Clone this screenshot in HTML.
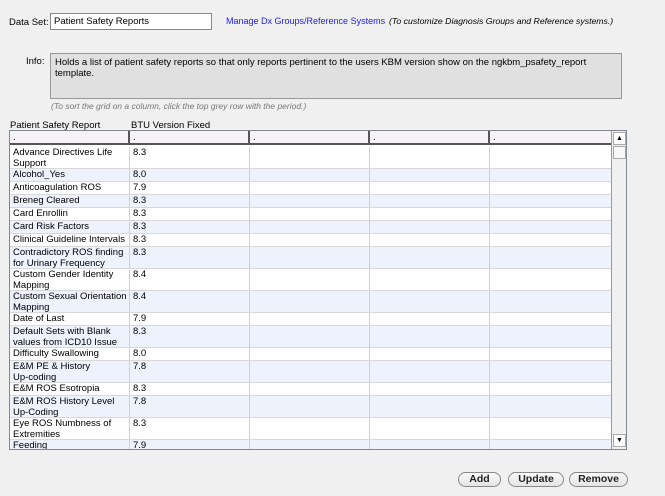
<!DOCTYPE html>
<html><head><style>
*{margin:0;padding:0;box-sizing:border-box}
body{width:665px;height:496px;background:#f0f0f0;font-family:"Liberation Sans",sans-serif;font-size:9.5px;color:#000;position:relative;overflow:hidden}
.a{position:absolute;white-space:nowrap}
.grid{position:absolute;left:9px;top:130px;width:618px;height:320px;border:1px solid #828790;background:#fff;overflow:hidden}
.hdr{position:absolute;left:0;top:0;width:601px;height:14px;background:#f5f3f6;border-bottom:2px solid #555}
.hc{position:absolute;top:0;height:14px;border-right:2px solid #555;padding:2px 0 0 3px;line-height:10px}
.row{position:absolute;left:0;width:601px;border-bottom:1px solid #d8d8d8}
.row.b{background:#eef2fd}
.c{position:absolute;top:0;bottom:0;border-right:1px solid #d0d0d0;padding:1px 3px;line-height:10.5px;white-space:nowrap;overflow:hidden}
.sb{position:absolute;left:601px;top:0;width:16px;height:318px;background:#f0f0f0;border-left:1px solid #999}
.btn{position:absolute;top:472px;height:15px;border:1px solid #888;border-radius:8px;background:linear-gradient(#fafafa,#e4e4e4);font-weight:bold;font-size:10.5px;text-align:center;line-height:13px;color:#222}
</style></head><body>
<div class="a" style="left:9px;top:17px">Data Set:</div>
<div class="a" style="left:50px;top:13px;width:162px;height:17px;border:1px solid #888;background:#fff;padding:2px 3px">Patient Safety Reports</div>
<div class="a" style="left:226px;top:16px;color:#1a1aff;font-size:9px">Manage Dx Groups/Reference Systems</div>
<div class="a" style="left:389px;top:16px;font-style:italic;font-size:8.7px">(To customize Diagnosis Groups and Reference systems.)</div>
<div class="a" style="left:26px;top:56px">Info:</div>
<div class="a" style="left:50px;top:53px;width:572px;height:46px;border:1px solid #999;background:#e0e0e0;padding:3px 4px;line-height:11px">Holds a list of patient safety reports so that only reports pertinent to the users KBM version show on the ngkbm_psafety_report<br>template.</div>
<div class="a" style="left:51px;top:101px;font-style:italic;font-size:8.5px;color:#777">(To sort the grid on a column, click the top grey row with the period.)</div>
<div class="a" style="left:10px;top:120px">Patient Safety Report</div>
<div class="a" style="left:131px;top:120px">BTU Version Fixed</div>
<div class="grid">
<div class="hdr">
<div class="hc" style="left:0;width:120px">.</div>
<div class="hc" style="left:120px;width:120px">.</div>
<div class="hc" style="left:240px;width:120px">.</div>
<div class="hc" style="left:360px;width:120px">.</div>
<div class="hc" style="left:480px;width:121px;border-right:none">.</div>
</div>
<div id="rows"></div>
<div class="sb">
<div style="position:absolute;left:1px;top:1px;width:13px;height:13px;background:#fff;border:1px solid #aaa;font-size:7px;text-align:center;line-height:11px">▲</div>
<div style="position:absolute;left:1px;top:15px;width:13px;height:13px;background:#f8f8f8;border:1px solid #aaa"></div>
<div style="position:absolute;left:1px;top:303px;width:13px;height:13px;background:#fff;border:1px solid #aaa;font-size:7px;text-align:center;line-height:11px">▼</div>
</div>
</div>
<div class="btn" style="left:458px;width:43px">Add</div>
<div class="btn" style="left:508px;width:56px">Update</div>
<div class="btn" style="left:569px;width:59px">Remove</div>
<script>
var d=[["Advance Directives Life<br>Support","8.3",2],["Alcohol_Yes","8.0",1],["Anticoagulation ROS","7.9",1],["Breneg Cleared","8.3",1],["Card Enrollin","8.3",1],["Card Risk Factors","8.3",1],["Clinical Guideline Intervals","8.3",1],["Contradictory ROS finding<br>for Urinary Frequency","8.3",2],["Custom Gender Identity<br>Mapping","8.4",2],["Custom Sexual Orientation<br>Mapping","8.4",2],["Date of Last","7.9",1],["Default Sets with Blank<br>values from ICD10 Issue","8.3",2],["Difficulty Swallowing","8.0",1],["E&amp;M PE &amp; History<br>Up-coding","7.8",2],["E&amp;M ROS Esotropia","8.3",1],["E&amp;M ROS History Level<br>Up-Coding","7.8",2],["Eye ROS Numbness of<br>Extremities","8.3",2],["Feeding","7.9",1]];
var y=16,h="";
d.forEach(function(r,i){var H=r[2]==2?22:13;h+='<div class="row'+(i%2?' b':'')+'" style="top:'+y+'px;height:'+H+'px"><div class="c" style="left:0;width:120px">'+r[0]+'</div><div class="c" style="left:120px;width:120px">'+r[1]+'</div><div class="c" style="left:240px;width:120px"></div><div class="c" style="left:360px;width:120px"></div><div class="c" style="left:480px;width:121px;border-right:none"></div></div>';y+=H;});
document.getElementById("rows").innerHTML=h;
</script>
</body></html>
